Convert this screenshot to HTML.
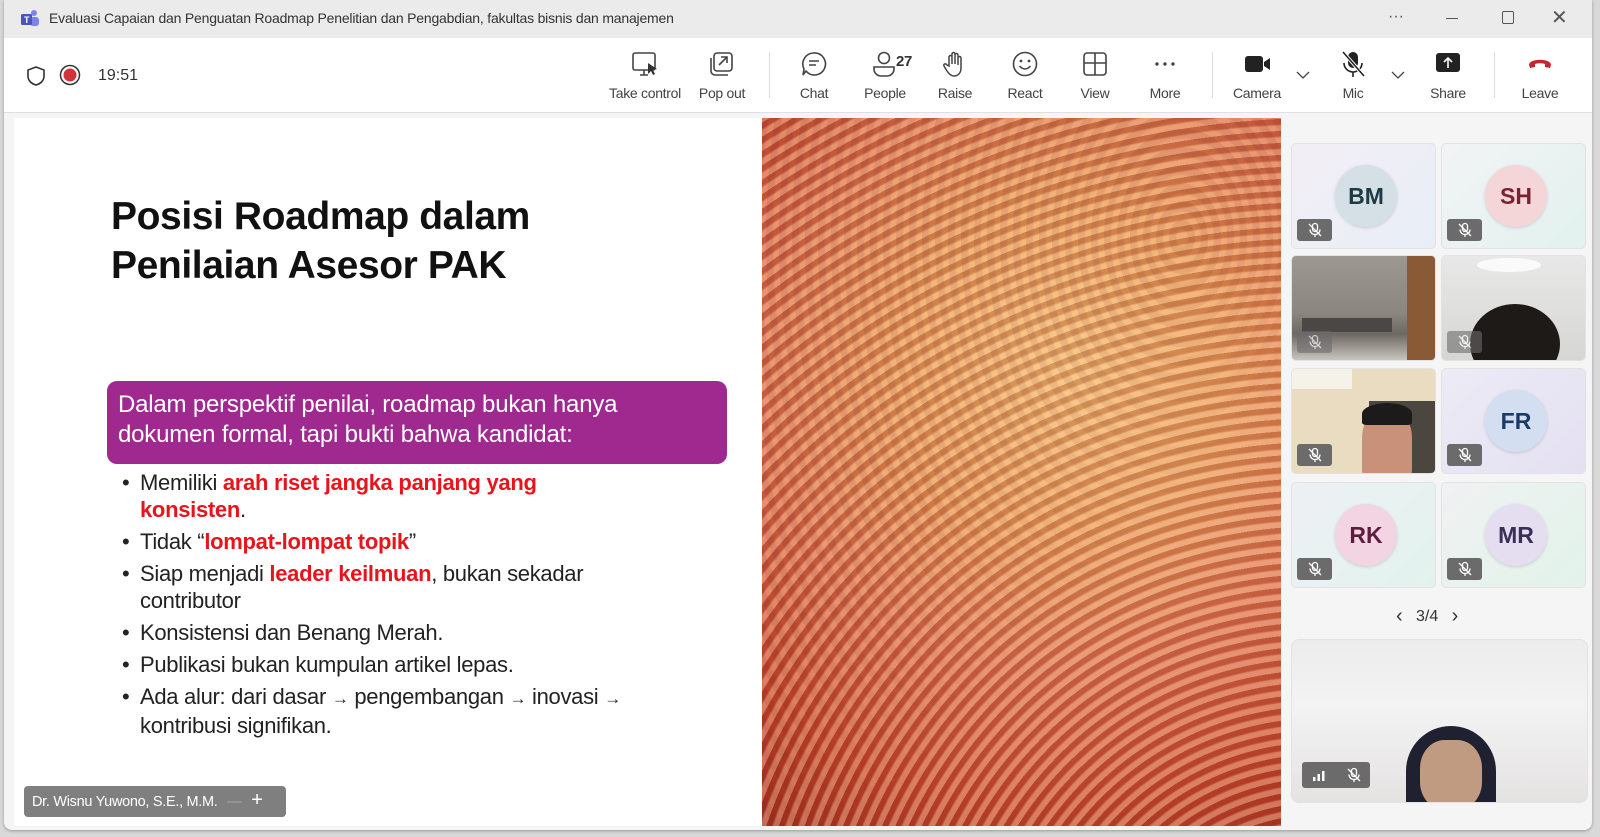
<!DOCTYPE html><html><head><meta charset="utf-8"><style>
*{margin:0;padding:0;box-sizing:border-box}
body{width:1600px;height:837px;background:#d9d9d9;font-family:"Liberation Sans",sans-serif;position:relative;overflow:hidden}
.win{position:absolute;left:4px;top:0;width:1588px;height:830px;background:#f5f5f5;border-radius:0 0 8px 8px;overflow:hidden;box-shadow:0 1px 3px rgba(0,0,0,.3)}
.tb{position:absolute;left:0;top:0;width:100%;height:38px;background:#ebebeb}
.title{position:absolute;left:45px;top:10px;font-size:14px;color:#333;letter-spacing:-.2px}
.bar{position:absolute;left:0;top:38px;width:100%;height:75px;background:#fff;border-bottom:1px solid #e0e0e0}
.it{position:absolute;top:0;width:80px;text-align:center;font-size:14px;color:#424242;letter-spacing:-.3px}
.it svg{position:absolute;left:26px;top:12px}
.it span{position:absolute;left:0;right:0;top:47px}
.sep{position:absolute;top:14px;width:1px;height:46px;background:#ddd}
.slide{position:absolute;left:10px;top:118px;width:1267px;height:708px;background:#fff}
.img{position:absolute;left:748px;top:0;width:519px;height:708px;overflow:hidden;
background:
repeating-radial-gradient(circle at 560px 900px,rgba(255,225,190,.35) 0 5px,rgba(110,25,10,.22) 7px 12px),
radial-gradient(circle at 300px 250px,#f6c27a 0,#eb9f5e 30%,#dd7150 55%,#c94a30 80%,#a8331f 100%)}
.img2{position:absolute;left:0;top:0;width:100%;height:100%;
background:repeating-radial-gradient(ellipse at 420px 120px,rgba(255,240,210,.35) 0 5px,rgba(150,50,20,.2) 7px 13px);mix-blend-mode:multiply;opacity:.6;
-webkit-mask:linear-gradient(135deg,#000 0,#000 45%,transparent 70%);mask:linear-gradient(135deg,#000 0,#000 45%,transparent 70%)}
h1{position:absolute;left:97px;top:74px;font-size:39px;line-height:49px;font-weight:bold;color:#111;letter-spacing:-.4px}
.pbox{position:absolute;left:93px;top:263px;width:620px;height:83px;background:#a0298f;border-radius:10px;color:#fff;font-size:24px;line-height:30px;padding:9px 11px;letter-spacing:-.2px;white-space:nowrap}
ul{position:absolute;left:108px;top:351px;width:600px;list-style:none;font-size:22px;color:#222;letter-spacing:-.3px;white-space:nowrap}
li{position:relative;padding-left:18px;line-height:27px;margin-bottom:5px}
li:before{content:"•";position:absolute;left:0}
.r{color:#e8141c;font-weight:bold}
.ar{font-size:17px}
.name{position:absolute;left:10px;top:668px;width:262px;height:31px;background:#7f7f7f;border-radius:4px;color:#fff;font-size:14.5px;padding:8px 8px;letter-spacing:-.3px}
.tile{position:absolute;width:145px;height:106px;border-radius:5px;overflow:hidden;border:1px solid #e2e2e2}
.av{position:absolute;left:43px;top:21px;width:62px;height:62px;border-radius:50%;font-size:23px;font-weight:bold;text-align:center;line-height:62px;box-shadow:0 1px 3px rgba(0,0,0,.15)}
.mu{position:absolute;left:5px;top:75px;width:35px;height:22px;background:#6b6b6b;border-radius:3px}
.mu svg{position:absolute;left:10px;top:3px}
</style></head><body>
<div class="win">
<div class="tb">
<svg style="position:absolute;left:16px;top:9px" width="20" height="18"><circle cx="14" cy="4" r="3" fill="#7b83eb"/><rect x="10" y="8" width="9" height="9" rx="3" fill="#7b83eb"/><rect x="1" y="5" width="11" height="11" rx="1.5" fill="#4b53bc"/><text x="4" y="14" font-size="9" fill="#fff" font-weight="bold" font-family="Liberation Sans">T</text></svg>
<div class="title">Evaluasi Capaian dan Penguatan Roadmap Penelitian dan Pengabdian, fakultas bisnis dan manajemen</div>
<div style="position:absolute;left:1384px;top:8px;font-size:16px;color:#555">···</div>
<div style="position:absolute;left:1442px;top:18px;width:12px;height:1px;background:#555"></div>
<div style="position:absolute;left:1498px;top:11px;width:12px;height:13px;border:1px solid #555;border-radius:2px"></div>
<div style="position:absolute;left:1547px;top:5px;font-size:20px;color:#555">✕</div>
</div>
<div class="bar">
<svg style="position:absolute;left:22px;top:27px" width="20" height="22"><path d="M10 2 L18 5 V11 C18 16 14 19 10 20 C6 19 2 16 2 11 V5 Z" fill="none" stroke="#333" stroke-width="1.6"/></svg>
<svg style="position:absolute;left:55px;top:26px" width="22" height="22"><circle cx="11" cy="11" r="9.5" fill="none" stroke="#333" stroke-width="1.5"/><circle cx="11" cy="11" r="6.5" fill="#d13438"/></svg>
<div style="position:absolute;left:94px;top:29px;font-size:16px;color:#333">19:51</div>
<div class="it" style="left:601px"><svg width="28" height="30"><rect x="2" y="3" width="22" height="17" rx="2" fill="none" stroke="#444" stroke-width="1.6"/><path d="M9 25 h8 M13 20 v5" stroke="#444" stroke-width="1.6"/><path d="M17 13 l9 6 -4 1 2 4 -2 1 -2 -4 -3 3z" fill="#333"/></svg><span>Take control</span></div>
<div class="it" style="left:678px"><svg width="28" height="30"><rect x="6" y="3" width="18" height="18" rx="3" fill="none" stroke="#444" stroke-width="1.6"/><path d="M3 8 v13 a4 4 0 0 0 4 4 h13" fill="none" stroke="#444" stroke-width="1.6"/><path d="M11 15 l8 -8 M13 7 h6 v6" fill="none" stroke="#444" stroke-width="1.6"/></svg><span>Pop out</span></div>
<div class="sep" style="left:765px"></div>
<div class="it" style="left:770px"><svg width="28" height="30"><path d="M14 3 a11 11 0 1 1 -8 18 l-3 4 1 -6 a11 11 0 0 1 10 -16z" fill="none" stroke="#444" stroke-width="1.6"/><path d="M9 11 h10 M9 15 h7" stroke="#444" stroke-width="1.6"/></svg><span>Chat</span></div>
<div class="it" style="left:841px"><svg width="50" height="30"><circle cx="13" cy="8" r="5.5" fill="none" stroke="#444" stroke-width="1.6"/><path d="M3 17 h20 v2 a7 7 0 0 1 -7 7 h-6 a7 7 0 0 1 -7 -7z" fill="none" stroke="#444" stroke-width="1.6"/><text x="25" y="16" font-size="15" font-weight="bold" fill="#333" font-family="Liberation Sans">27</text></svg><span>People</span></div>
<div class="it" style="left:911px"><svg width="28" height="30"><path d="M8 16 V7 a1.5 1.5 0 0 1 3 0 V14 V4 a1.5 1.5 0 0 1 3 0 V14 V5 a1.5 1.5 0 0 1 3 0 V15 V8 a1.5 1.5 0 0 1 3 0 V18 c0 5 -3 8 -7 8 c-3 0 -5 -2 -7 -5 l-3 -5 c-1 -2 2 -3 3 -1z" fill="none" stroke="#444" stroke-width="1.5"/></svg><span>Raise</span></div>
<div class="it" style="left:981px"><svg width="28" height="30"><circle cx="14" cy="14" r="11.5" fill="none" stroke="#444" stroke-width="1.6"/><circle cx="10" cy="11" r="1.4" fill="#444"/><circle cx="18" cy="11" r="1.4" fill="#444"/><path d="M8.5 16 q5.5 6 11 0" fill="none" stroke="#444" stroke-width="1.6"/></svg><span>React</span></div>
<div class="it" style="left:1051px"><svg width="28" height="30"><rect x="3" y="3" width="22" height="22" rx="3" fill="none" stroke="#444" stroke-width="1.6"/><path d="M14 3 v22 M3 13 h22" stroke="#444" stroke-width="1.6"/></svg><span>View</span></div>
<div class="it" style="left:1121px"><svg width="28" height="30"><circle cx="6" cy="14" r="1.7" fill="#444"/><circle cx="14" cy="14" r="1.7" fill="#444"/><circle cx="22" cy="14" r="1.7" fill="#444"/></svg><span>More</span></div>
<div class="sep" style="left:1208px"></div>
<div class="it" style="left:1213px"><svg width="30" height="30"><rect x="2" y="6" width="18" height="16" rx="3" fill="#222"/><path d="M21 12 l6 -4 v12 l-6 -4z" fill="#222"/></svg><span>Camera</span></div>
<svg style="position:absolute;left:1292px;top:32px" width="14" height="10"><path d="M1 2 l6 6 6 -6" fill="none" stroke="#444" stroke-width="1.3"/></svg>
<div class="it" style="left:1309px"><svg width="30" height="30"><rect x="9" y="2" width="10" height="16" rx="5" fill="#222"/><path d="M5 13 a9 9 0 0 0 18 0 M14 22 v5" fill="none" stroke="#222" stroke-width="1.6"/><path d="M4 2 l21 24" stroke="#fff" stroke-width="3.5"/><path d="M4 2 l21 24" stroke="#222" stroke-width="1.6"/></svg><span>Mic</span></div>
<svg style="position:absolute;left:1387px;top:32px" width="14" height="10"><path d="M1 2 l6 6 6 -6" fill="none" stroke="#444" stroke-width="1.3"/></svg>
<div class="it" style="left:1404px"><svg width="30" height="30"><rect x="2" y="3" width="24" height="19" rx="3" fill="#222"/><path d="M14 18 V8 M10 12 l4 -4 4 4" fill="none" stroke="#fff" stroke-width="1.6"/></svg><span>Share</span></div>
<div class="sep" style="left:1490px"></div>
<div class="it" style="left:1496px"><svg width="30" height="30"><path d="M3 15 c0 -7 22 -7 22 0 l-1 3 -5 -1 v-3 c-3 -1 -7 -1 -10 0 v3 l-5 1z" fill="#c4262e"/></svg><span>Leave</span></div>
</div>
<div class="slide">
<h1>Posisi Roadmap dalam<br>Penilaian Asesor PAK</h1>
<div class="pbox">Dalam perspektif penilai, roadmap bukan hanya<br>dokumen formal, tapi bukti bahwa kandidat:</div>
<ul>
<li>Memiliki <span class="r">arah riset jangka panjang yang<br>konsisten</span>.</li>
<li>Tidak “<span class="r">lompat-lompat topik</span>”</li>
<li>Siap menjadi <span class="r">leader keilmuan</span>, bukan sekadar<br>contributor</li>
<li>Konsistensi dan Benang Merah.</li>
<li>Publikasi bukan kumpulan artikel lepas.</li>
<li>Ada alur: dari dasar <span class="ar">→</span> pengembangan <span class="ar">→</span> inovasi <span class="ar">→</span><br>kontribusi signifikan.</li>
</ul>
<div class="name">Dr. Wisnu Yuwono, S.E., M.M. <span style="color:#aaa;margin-left:6px">—</span> <span style="font-size:20px;margin-left:6px;line-height:10px">+</span></div>
<div class="img"><div class="img2"></div></div>
</div>
<svg width="0" height="0" style="position:absolute"><symbol id="m" viewBox="0 0 16 16"><rect x="5.5" y="1.5" width="5" height="8" rx="2.5" fill="none" stroke="#fff" stroke-width="1.3"/><path d="M3 7.5 a5 5 0 0 0 10 0 M8 12.5 v2.5" fill="none" stroke="#fff" stroke-width="1.3"/><path d="M2 2 l12 12" stroke="#fff" stroke-width="1.3"/></symbol></svg>
<div class="tile" style="left:1287px;top:143px;background:linear-gradient(135deg,#f3eef5,#e8eef7)"><div class="av" style="background:#d5e0e6;color:#1d3b44">BM</div><div class="mu"><svg width="16" height="16"><use href="#m"/></svg></div></div>
<div class="tile" style="left:1437px;top:143px;background:linear-gradient(135deg,#f2f3f5,#e2f2ee)"><div class="av" style="background:#f5d6d8;color:#7a2232">SH</div><div class="mu"><svg width="16" height="16"><use href="#m"/></svg></div></div>
<div class="tile" style="left:1287px;top:255px;background:linear-gradient(180deg,#9c9791 0,#8b8680 55%,#6e6862 75%,#c8c4be 100%)"><div style="position:absolute;right:0;top:0;width:28px;height:100%;background:#8a5a36"></div><div style="position:absolute;left:10px;top:62px;width:90px;height:14px;background:#4a4744"></div><div class="mu" style="opacity:.6"><svg width="16" height="16"><use href="#m"/></svg></div></div>
<div class="tile" style="left:1437px;top:255px;background:linear-gradient(180deg,#e8e8e8,#d6d6d4)"><div style="position:absolute;left:35px;top:2px;width:64px;height:14px;border-radius:50%;background:#fafafa"></div><div style="position:absolute;left:28px;top:48px;width:90px;height:80px;border-radius:50%;background:#1e1a18"></div><div class="mu" style="opacity:.6"><svg width="16" height="16"><use href="#m"/></svg></div></div>
<div class="tile" style="left:1287px;top:368px;background:#e9dcc0"><div style="position:absolute;left:0;top:0;width:60px;height:20px;background:#f5f2ea"></div><div style="position:absolute;left:77px;top:32px;width:68px;height:80px;background:#4c4640"></div><div style="position:absolute;left:70px;top:38px;width:50px;height:70px;border-radius:45% 45% 10% 10%;background:#c9917a"></div><div style="position:absolute;left:70px;top:34px;width:50px;height:22px;border-radius:50% 50% 10% 10%;background:#1c1a1a"></div><div class="mu"><svg width="16" height="16"><use href="#m"/></svg></div></div>
<div class="tile" style="left:1437px;top:368px;background:linear-gradient(135deg,#ecebf5,#e4e0f2)"><div class="av" style="background:#d3dff0;color:#1a3a6a">FR</div><div class="mu"><svg width="16" height="16"><use href="#m"/></svg></div></div>
<div class="tile" style="left:1287px;top:482px;background:linear-gradient(135deg,#eef0f3,#e2f3ee)"><div class="av" style="background:#f2d4e2;color:#5e1c3e">RK</div><div class="mu"><svg width="16" height="16"><use href="#m"/></svg></div></div>
<div class="tile" style="left:1437px;top:482px;background:linear-gradient(135deg,#f0f1f2,#e2f3ea)"><div class="av" style="background:#e5def0;color:#3b2e57">MR</div><div class="mu"><svg width="16" height="16"><use href="#m"/></svg></div></div>
<div style="position:absolute;left:1392px;top:604px;font-size:16px;color:#333"><span style="font-size:20px;position:relative;top:1px">‹</span>&nbsp;&nbsp;&nbsp;3/4&nbsp;&nbsp;&nbsp;<span style="font-size:20px;position:relative;top:1px">›</span></div>
<div class="tile" style="left:1287px;top:639px;width:297px;height:164px;background:linear-gradient(180deg,#ececec 0,#f3f3f3 40%,#e5e2e2 100%);border-radius:8px"><div style="position:absolute;left:114px;top:86px;width:90px;height:90px;border-radius:50% 50% 0 0;background:#1f2030"></div><div style="position:absolute;left:128px;top:100px;width:62px;height:70px;border-radius:40%;background:#c19a82"></div><div style="position:absolute;left:10px;top:122px;width:68px;height:26px;background:#6b6b6b;border-radius:3px"><svg style="position:absolute;left:10px;top:6px" width="14" height="14"><rect x="1" y="9" width="2.5" height="4" fill="#fff"/><rect x="5.5" y="6" width="2.5" height="7" fill="#fff"/><rect x="10" y="3" width="2.5" height="10" fill="#fff"/></svg><svg style="position:absolute;left:44px;top:5px" width="16" height="16"><use href="#m"/></svg></div></div>
</div>
</body></html>
